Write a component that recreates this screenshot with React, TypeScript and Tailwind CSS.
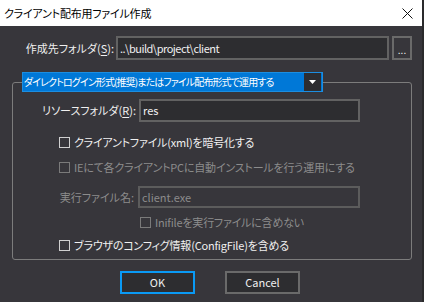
import { ReactNode } from 'react';

const FONT = "font-['Noto_Sans_CJK_JP','Noto_Sans',sans-serif] [font-feature-settings:'palt']";

// チェックボックス
const Check = ({ label, disabled }: { label: ReactNode; disabled?: boolean }) => (
  <div className="flex items-center h-[16px]">
    <div
      className={`w-[11px] h-[11px] border ${
        disabled ? 'border-[#7a7a7a]' : 'border-[#d0d0d0]'
      }`}
    />
    <span
      className={`ml-[4px] text-[11px] tracking-[-0.2px] leading-none ${
        disabled ? 'text-[#8c8c8c]' : 'text-[#f0f0f0]'
      }`}
    >
      {label}
    </span>
  </div>
);

export default function App() {
  return (
    <div className={`flex w-[424px] h-[302px] bg-[#2a2a2c] ${FONT}`}>
      <div className="flex flex-col w-[422px] h-full bg-[#37363b]">
        {/* タイトルバー */}
        <div className="flex items-center justify-between h-[26px] bg-white pl-[4px] pr-[9px] shrink-0">
          <span className="text-[11px] tracking-[-0.2px] text-black leading-none">クライアント配布用ファイル作成</span>
          <svg width="11" height="11" viewBox="0 0 11 11">
            <path d="M0.5 0.5L10.5 10.5M10.5 0.5L0.5 10.5" stroke="#111" strokeWidth="1" />
          </svg>
        </div>

        {/* 作成先フォルダ */}
        <div className="flex items-center mt-[10px] h-[24px]">
          <div className="w-[114px] text-right text-[11px] text-[#f0f0f0] leading-none">
            作成先フォルダ(<span className="underline underline-offset-2">S</span>):
          </div>
          <div className="ml-[2px] w-[273px] h-[24px] border-2 border-[#626262] bg-[#2d2d30] flex items-center pl-[2px] text-[11px] tracking-[-0.5px] text-[#f0f0f0]">
            ..\build\project\client
          </div>
          <div className="ml-[3px] w-[20px] h-[24px] border-2 border-[#6a6a6a] flex items-end justify-center pb-[3px] text-[10px] leading-none text-[#f0f0f0]">
            ...
          </div>
        </div>

        {/* グループ */}
        <fieldset className="ml-[12px] mt-[12px] w-[400px] border border-[#7c7c7c] rounded-[3px] pb-[6px]">
          <legend className="ml-[9px] w-[301px] h-[20px] bg-[#0078d7] border border-[#1c8ee0] flex items-center justify-between">
            <span className="pl-[1px] text-[10px] tracking-[-0.9px] text-white leading-none whitespace-nowrap">
              ダイレクトログイン形式(推奨)またはファイル配布形式で運用する
            </span>
            <div className="w-[17px] h-[18px] mr-[1px] bg-[#2d2d30] flex items-center justify-center">
              <svg width="7" height="4" viewBox="0 0 7 4">
                <path d="M0 0H7L3.5 4Z" fill="#ffffff" />
              </svg>
            </div>
          </legend>

          <div className="flex items-center mt-[7px]">
            <div className="w-[123px] text-right text-[11px] text-[#f0f0f0] leading-none">
              リソースフォルダ(<span className="underline underline-offset-2">R</span>):
            </div>
            <div className="ml-[3px] w-[221px] h-[23px] border-2 border-[#626262] bg-[#2d2d30] flex items-center pl-[2px] text-[11px] text-[#f0f0f0]">
              res
            </div>
          </div>

          <div className="ml-[46px] mt-[12px]">
            <Check label="クライアントファイル(xml)を暗号化する" />
          </div>
          <div className="ml-[46px] mt-[9px]">
            <Check label="IEにて各クライアントPCに自動インストールを行う運用にする" disabled />
          </div>

          <div className="flex items-center mt-[11px]">
            <div className="w-[121px] text-right text-[11px] text-[#8c8c8c] leading-none">実行ファイル名:</div>
            <div className="ml-[4px] w-[222px] h-[22px] border-2 border-[#5c5c5c] flex items-center pl-[2px] text-[11px] text-[#8c8c8c]">
              client.exe
            </div>
          </div>

          <div className="ml-[127px] mt-[6px]">
            <Check label="Inifileを実行ファイルに含めない" disabled />
          </div>
          <div className="ml-[46px] mt-[7px]">
            <Check label="ブラウザのコンフィグ情報(ConfigFile)を含める" />
          </div>
        </fieldset>

        {/* ボタン */}
        <div className="flex mt-[11px] ml-[120px] gap-[30px]">
          <button className="w-[75px] h-[23px] border-2 border-[#0a9af5] bg-[#2d2d30] text-[11px] text-[#f0f0f0]">
            OK
          </button>
          <button className="w-[75px] h-[23px] border-2 border-[#6a6a6a] bg-[#2d2d30] text-[11px] text-[#f0f0f0]">
            Cancel
          </button>
        </div>
      </div>
      <div className="w-[2px] h-full bg-[#2a2a2c]" />
    </div>
  );
}
